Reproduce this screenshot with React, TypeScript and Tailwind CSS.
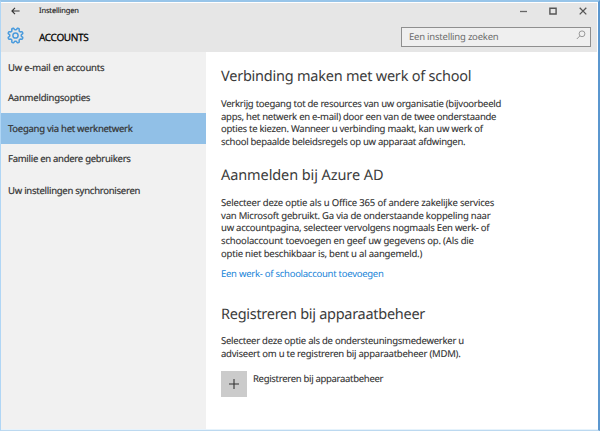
import React from "react";

type Line = { text: string; className: string };

function Paragraph({ lines, className }: { lines: Line[]; className: string }) {
  return (
    <p className={`text-[9.5px] leading-[12.7px] text-[#303030] whitespace-nowrap [-webkit-text-stroke:0.1px_#303030] ${className}`}>
      {lines.map((line) => (
        <span key={line.text} className={`block ${line.className}`}>
          {line.text}
        </span>
      ))}
    </p>
  );
}

function Heading({ children, className }: { children: string; className: string }) {
  return <h2 className={`text-[14.5px] leading-5 text-[#3c3c3c] whitespace-nowrap ${className}`}>{children}</h2>;
}

const gearPath = (() => {
  const points: string[] = [];
  for (let i = 0; i <= 96; i++) {
    const a = (i / 96) * Math.PI * 2;
    const wave = Math.max(-1, Math.min(1, Math.cos(a * 8 + Math.PI) * 1.6));
    const r = 6.7 + wave * 0.95;
    points.push(`${(8.5 + r * Math.sin(a)).toFixed(2)} ${(8.5 - r * Math.cos(a)).toFixed(2)}`);
  }
  return `M${points.join("L")}Z`;
})();

function TitleBar() {
  return (
    <header className="h-[49px] mr-px bg-[#e6e6e6] flex flex-col">
      <div className="h-4 flex items-center pl-[10px] pr-[10px]">
        <svg width="9" height="8" viewBox="0 0 9 8" fill="none" stroke="#333" strokeWidth="1.1">
          <path d="M4 .8.9 4 4 7.2M1 4h7.6" />
        </svg>
        <span className="ml-[19px] text-[7.5px] leading-4 text-[#222] tracking-[-0.15px] [-webkit-text-stroke:0.15px_#222]">Instellingen</span>
        <div className="ml-auto flex items-center">
          <svg width="7" height="8" viewBox="0 0 7 8" stroke="#666" strokeWidth="1.3">
            <path d="M0 4.5h7" />
          </svg>
          <svg className="ml-[22px]" width="8" height="8" viewBox="0 0 8 8" fill="none" stroke="#555" strokeWidth="1.4">
            <path d="M.9 1.2h6.2v5.8H.9z" />
          </svg>
          <svg className="ml-[22px]" width="8" height="8" viewBox="0 0 8 8" stroke="#555" strokeWidth="1.3">
            <path d="m.7.8 6.6 6.6M7.3.8.7 7.4" />
          </svg>
        </div>
      </div>
      <div className="h-[33px] flex pl-[6px] pr-[6px]">
        <svg className="mt-2" width="17" height="17" viewBox="0 0 17 17" fill="none" stroke="#4a9bdd" strokeWidth="1.5">
          <path d={gearPath} />
          <circle cx="8.5" cy="8.5" r="2.6" />
        </svg>
        <h1 className="ml-[15px] mt-[10px] text-[10px] leading-[16px] text-black [-webkit-text-stroke:0.25px_#000] tracking-[-0.35px]">ACCOUNTS</h1>
        <div className="ml-auto mt-2 h-5 w-[190px] border border-[#8f8f8f] bg-[#efefef] flex items-center pl-[7px] pr-1">
          <span className="text-[9.5px] leading-4 text-[#6b6b6b] tracking-[-0.22px]">Een instelling zoeken</span>
          <svg className="ml-auto mb-1" width="10" height="10" viewBox="0 0 10 10" fill="none" stroke="#999" strokeWidth="1">
            <circle cx="6" cy="3.8" r="2.9" />
            <path d="M3.9 5.9.8 9" />
          </svg>
        </div>
      </div>
    </header>
  );
}

const navItems = [
  { label: "Uw e-mail en accounts", className: "h-[31px] pt-[2px] tracking-[-0.2px]" },
  { label: "Aanmeldingsopties", className: "h-[30px] tracking-[-0.22px]" },
  { label: "Toegang via het werknetwerk", className: "h-[31px] bg-[#91c0e7] pt-[2px] tracking-[-0.26px]" },
  { label: "Familie en andere gebruikers", className: "h-[31px] tracking-[-0.27px]" },
  { label: "Uw instellingen synchroniseren", className: "h-[31px] pt-[2px] tracking-[-0.25px]" },
];

export default function App() {
  return (
    <div className="w-[600px] h-[431px] overflow-hidden bg-white flex flex-col border-l border-l-[#b0d6f5] border-t-2 border-t-[#98c5e9] border-r-2 border-r-[#5b97cf] border-b border-b-[#bcd9f0] font-['Noto_Sans',sans-serif] [text-rendering:geometricPrecision]">
      <div className="h-px bg-white" />
      <TitleBar />
      <div className="flex flex-1 border-b border-b-[#e6f3fc]">
        <nav className="w-[205px] bg-[#f1f1f1] flex flex-col">
          {navItems.map((item) => (
            <div
              key={item.label}
              className={`flex items-center pl-[7px] text-[9.5px] whitespace-nowrap text-[#333] [-webkit-text-stroke:0.2px_#333] ${item.className}`}
            >
              {item.label}
            </div>
          ))}
        </nav>
        <main className="flex-1 pl-[15px]">
          <Heading className="mt-[14px] tracking-[-0.23px]">Verbinding maken met werk of school</Heading>
          <Paragraph
            className="mt-[12px]"
            lines={[
              { text: "Verkrijg toegang tot de resources van uw organisatie (bijvoorbeeld", className: "tracking-[-0.26px]" },
              { text: "apps, het netwerk en e-mail) door een van de twee onderstaande", className: "tracking-[-0.25px]" },
              { text: "opties te kiezen. Wanneer u verbinding maakt, kan uw werk of", className: "tracking-[-0.26px]" },
              { text: "school bepaalde beleidsregels op uw apparaat afdwingen.", className: "tracking-[-0.27px]" },
            ]}
          />
          <Heading className="mt-[16px] tracking-[-0.09px]">Aanmelden bij Azure AD</Heading>
          <Paragraph
            className="mt-[12px]"
            lines={[
              { text: "Selecteer deze optie als u Office 365 of andere zakelijke services", className: "tracking-[-0.17px]" },
              { text: "van Microsoft gebruikt. Ga via de onderstaande koppeling naar", className: "tracking-[-0.2px]" },
              { text: "uw accountpagina, selecteer vervolgens nogmaals Een werk- of", className: "tracking-[-0.24px]" },
              { text: "schoolaccount toevoegen en geef uw gegevens op. (Als die", className: "tracking-[-0.17px]" },
              { text: "optie niet beschikbaar is, bent u al aangemeld.)", className: "tracking-[-0.2px]" },
            ]}
          />
          <a className="mt-[7px] block text-[9.5px] leading-[13px] tracking-[-0.26px] text-[#1683d8]">Een werk- of schoolaccount toevoegen</a>
          <Heading className="mt-[24px] tracking-[-0.28px]">Registreren bij apparaatbeheer</Heading>
          <Paragraph
            className="mt-[11px]"
            lines={[
              { text: "Selecteer deze optie als de ondersteuningsmedewerker u", className: "tracking-[-0.24px]" },
              { text: "adviseert om u te registreren bij apparaatbeheer (MDM).", className: "tracking-[-0.23px]" },
            ]}
          />
          <div className="mt-[10px] flex">
            <div className="w-[26px] h-[26px] bg-[#cbcbcb] flex items-center justify-center">
              <svg width="10" height="10" viewBox="0 0 10 10" stroke="#333" strokeWidth="1.1">
                <path d="M5 0v10M0 5h10" />
              </svg>
            </div>
            <span className="ml-[6px] mt-[1px] text-[9.5px] leading-[13px] tracking-[-0.3px] text-[#303030] [-webkit-text-stroke:0.1px_#303030]">Registreren bij apparaatbeheer</span>
          </div>
        </main>
      </div>
    </div>
  );
}
